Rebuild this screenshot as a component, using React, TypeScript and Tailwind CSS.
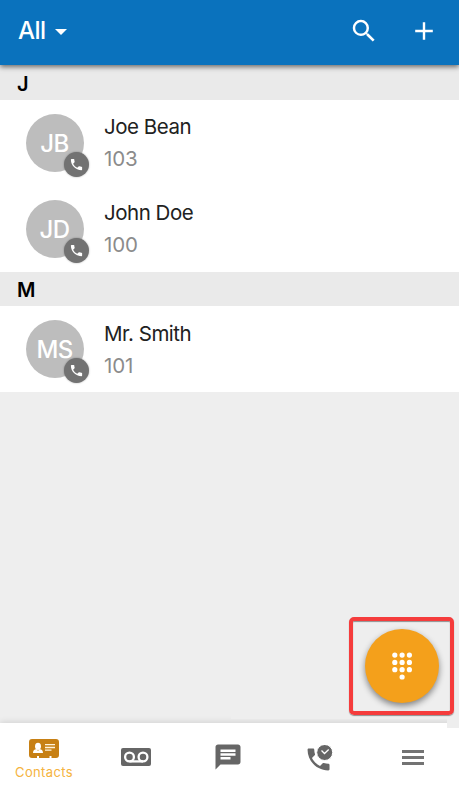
import React from "react";

const PHONE =
  "M6.62 10.79c1.44 2.83 3.76 5.14 6.59 6.59l2.2-2.2c.27-.27.67-.36 1.02-.24 1.12.37 2.33.57 3.57.57.55 0 1 .45 1 1V20c0 .55-.45 1-1 1-9.39 0-17-7.61-17-17 0-.55.45-1 1-1h3.5c.55 0 1 .45 1 1 0 1.25.2 2.45.57 3.57.11.35.03.74-.25 1.02l-2.2 2.2z";

function SectionHeader({ letter, className }: { letter: string; className: string }) {
  return (
    <h2 className={`flex shrink-0 items-center bg-[#eaeaea] pl-[17px] text-[20px] font-semibold text-black ${className}`}>
      {letter}
    </h2>
  );
}

function ContactRow({ initials, name, ext, textClass }: { initials: string; name: string; ext: string; textClass: string }) {
  return (
    <li className="flex h-[86px] bg-white pl-[26px] pt-[14px]">
      <div className="relative flex h-[58px] w-[58px] items-center justify-center rounded-full bg-[#bdbdbd] pr-[1px] pt-[2px] text-[24px] font-medium tracking-[-0.6px] text-white">
        {initials}
        <span className="absolute left-[38px] top-[37.5px] flex h-[25px] w-[25px] items-center justify-center rounded-full bg-[#727272] shadow-[0_0_2px_rgba(0,0,0,0.35)]">
          <svg className="h-[15px] w-[15px]" viewBox="0 0 24 24" fill="white">
            <path d={PHONE} />
          </svg>
        </span>
      </div>
      <div className={`ml-5 flex flex-col text-[20.5px] leading-8 ${textClass}`}>
        <span className="tracking-[-0.48px] text-[#212121]">{name}</span>
        <span className="tracking-[-0.1px] text-[#8b8b8b]">{ext}</span>
      </div>
    </li>
  );
}

function Header() {
  return (
    <header className="relative z-10 flex h-[65px] shrink-0 items-center bg-[#0a72bd] pl-[18px] pr-5 text-white shadow-[0_2px_5px_rgba(0,0,0,0.55)]">
      <button className="flex items-center pb-[4px] text-[24px] font-medium leading-none tracking-[-0.5px]">
        All
        <svg className="ml-[9px] mt-[3px] h-[6px] w-[12px]" viewBox="0 0 12 6" fill="white">
          <path d="M0 0h12L6 6z" />
        </svg>
      </button>
      <svg className="-mt-[4px] ml-auto h-[30px] w-[30px]" viewBox="0 0 24 24" fill="white">
        <path d="M15.5 14h-.79l-.28-.27A6.471 6.471 0 0 0 16 9.5 6.5 6.5 0 1 0 9.5 16c1.61 0 3.09-.59 4.23-1.57l.27.28v.79l5 4.99L20.49 19l-4.99-5zm-6 0C7.01 14 5 11.99 5 9.5S7.01 5 9.5 5 14 7.01 14 9.5 11.99 14 9.5 14z" />
      </svg>
      <svg className="-mt-[3px] ml-[30px] h-[30px] w-[30px]" viewBox="0 0 30 30" fill="white">
        <path d="M6.2 13.8h7.6V6.2h2.4v7.6h7.6v2.4h-7.6v7.6h-2.4v-7.6H6.2z" />
      </svg>
    </header>
  );
}

function DialButton() {
  return (
    <div className="absolute left-[349px] top-[617px] h-[98px] w-[105px] rounded-[5px] border-[4px] border-[#f53c3c] pl-[12.4px] pt-[8.4px] shadow-[0_1px_1px_rgba(0,0,0,0.4),inset_0_1px_1px_rgba(0,0,0,0.4)]">
      <button className="flex h-[74px] w-[74px] items-center justify-center rounded-full bg-[#f4a01b] shadow-[0_3px_6px_rgba(0,0,0,0.45)]">
        <svg className="-ml-[1px] h-[28px] w-[22px]" viewBox="0 0 22 28" fill="white">
          {[3.8, 11.1, 18.4].map((x) =>
            [3.1, 10.4, 17.7].map((y) => <circle key={`${x}-${y}`} cx={x} cy={y} r="2.6" />)
          )}
          <circle cx="11.1" cy="25" r="2.6" />
        </svg>
      </button>
    </div>
  );
}

function TabBar() {
  return (
    <nav className="relative h-[69px] shrink-0 bg-white shadow-[0_-1px_6px_rgba(0,0,0,0.12)]">
      <div className="flex h-full">
        <div className="flex w-[88px] flex-col items-center pt-[16px]">
          <svg className="h-[20px] w-[30px]" viewBox="0 0 30 20">
            <path fill="#c78014" d="M3 0h24a3 3 0 0 1 3 3v13a3 3 0 0 1-3 3h-4.5v-2h-2v2H10v-2H8v2H3a3 3 0 0 1-3-3V3a3 3 0 0 1 3-3z" />
            <ellipse cx="9" cy="7.3" rx="3" ry="3.6" fill="white" />
            <path fill="white" d="M4 14c0-2.5 1-3.5 3.5-4L9 12l1.5-2c2.5.5 3.5 1.5 3.5 4z" />
            <path stroke="#fff3dc" strokeWidth="1.3" d="M16 5.7h10M16 8.5h10M16 11.2h6.5" />
          </svg>
          <span className="mt-[4px] text-[13px] leading-[18px] tracking-[0.35px] text-[#f5b340]">Contacts</span>
        </div>
        <div className="flex w-[96px] justify-center pt-[25px]">
          <svg className="h-[18px] w-[30px]" viewBox="0 0 30 18">
            <rect width="30" height="18" rx="2" fill="#666" />
            <g fill="none" stroke="white" strokeWidth="2.3">
              <circle cx="8.5" cy="9" r="4.4" />
              <circle cx="22" cy="9" r="4.4" />
              <path d="M8.5 13.4H22" />
            </g>
          </svg>
        </div>
        <div className="flex w-[88px] justify-center pt-[19px]">
          <svg className="h-[30px] w-[30px]" viewBox="0 0 24 24" fill="#666">
            <path d="M20 2H4c-1.1 0-1.99.9-1.99 2L2 22l4-4h14c1.1 0 2-.9 2-2V4c0-1.1-.9-2-2-2zM6 9h12v2H6V9zm8 5H6v-2h8v2zm4-6H6V6h12v2z" />
          </svg>
        </div>
        <div className="flex w-[96px] justify-center pt-[22px]">
          <svg className="h-[26px] w-[26px]" viewBox="0 0 26 26">
            <path transform="translate(-3.1 -.2) scale(1.22)" fill="#666" d={PHONE} />
            <circle cx="17.7" cy="7.5" r="8" fill="#666" stroke="white" strokeWidth="1" />
            <path fill="none" stroke="white" strokeWidth="1.3" d="m14.5 5.5 3 3 4.2-4" />
          </svg>
        </div>
        <div className="flex flex-1 flex-col items-center gap-[3px] pr-[1px] pt-[27px]">
          <i className="h-[3px] w-[22px] bg-[#737373]" />
          <i className="h-[3px] w-[22px] bg-[#737373]" />
          <i className="h-[3px] w-[22px] bg-[#737373]" />
        </div>
      </div>
      <i className="absolute right-0 top-[-8px] h-[13px] w-[12px] bg-[#eee]" />
      <i className="absolute left-[231px] top-[-13px] h-[9px] w-[216px] bg-[#eee]" />
    </nav>
  );
}

export default function App() {
  return (
    <div className="relative flex h-[792px] w-[459px] flex-col overflow-hidden bg-[#eee] font-['Inter','Liberation_Sans',sans-serif]">
      <Header />
      <main className="flex-1">
        <SectionHeader letter="J" className="h-[35px] pt-[3px]" />
        <ul>
          <ContactRow initials="JB" name="Joe Bean" ext="103" textClass="-mt-[2.6px]" />
          <ContactRow initials="JD" name="John Doe" ext="100" textClass="-mt-[2.6px]" />
        </ul>
        <SectionHeader letter="M" className="h-[34px] pt-[2px]" />
        <ul>
          <ContactRow initials="MS" name="Mr. Smith" ext="101" textClass="-mt-[2px]" />
        </ul>
      </main>
      <TabBar />
      <DialButton />
    </div>
  );
}
